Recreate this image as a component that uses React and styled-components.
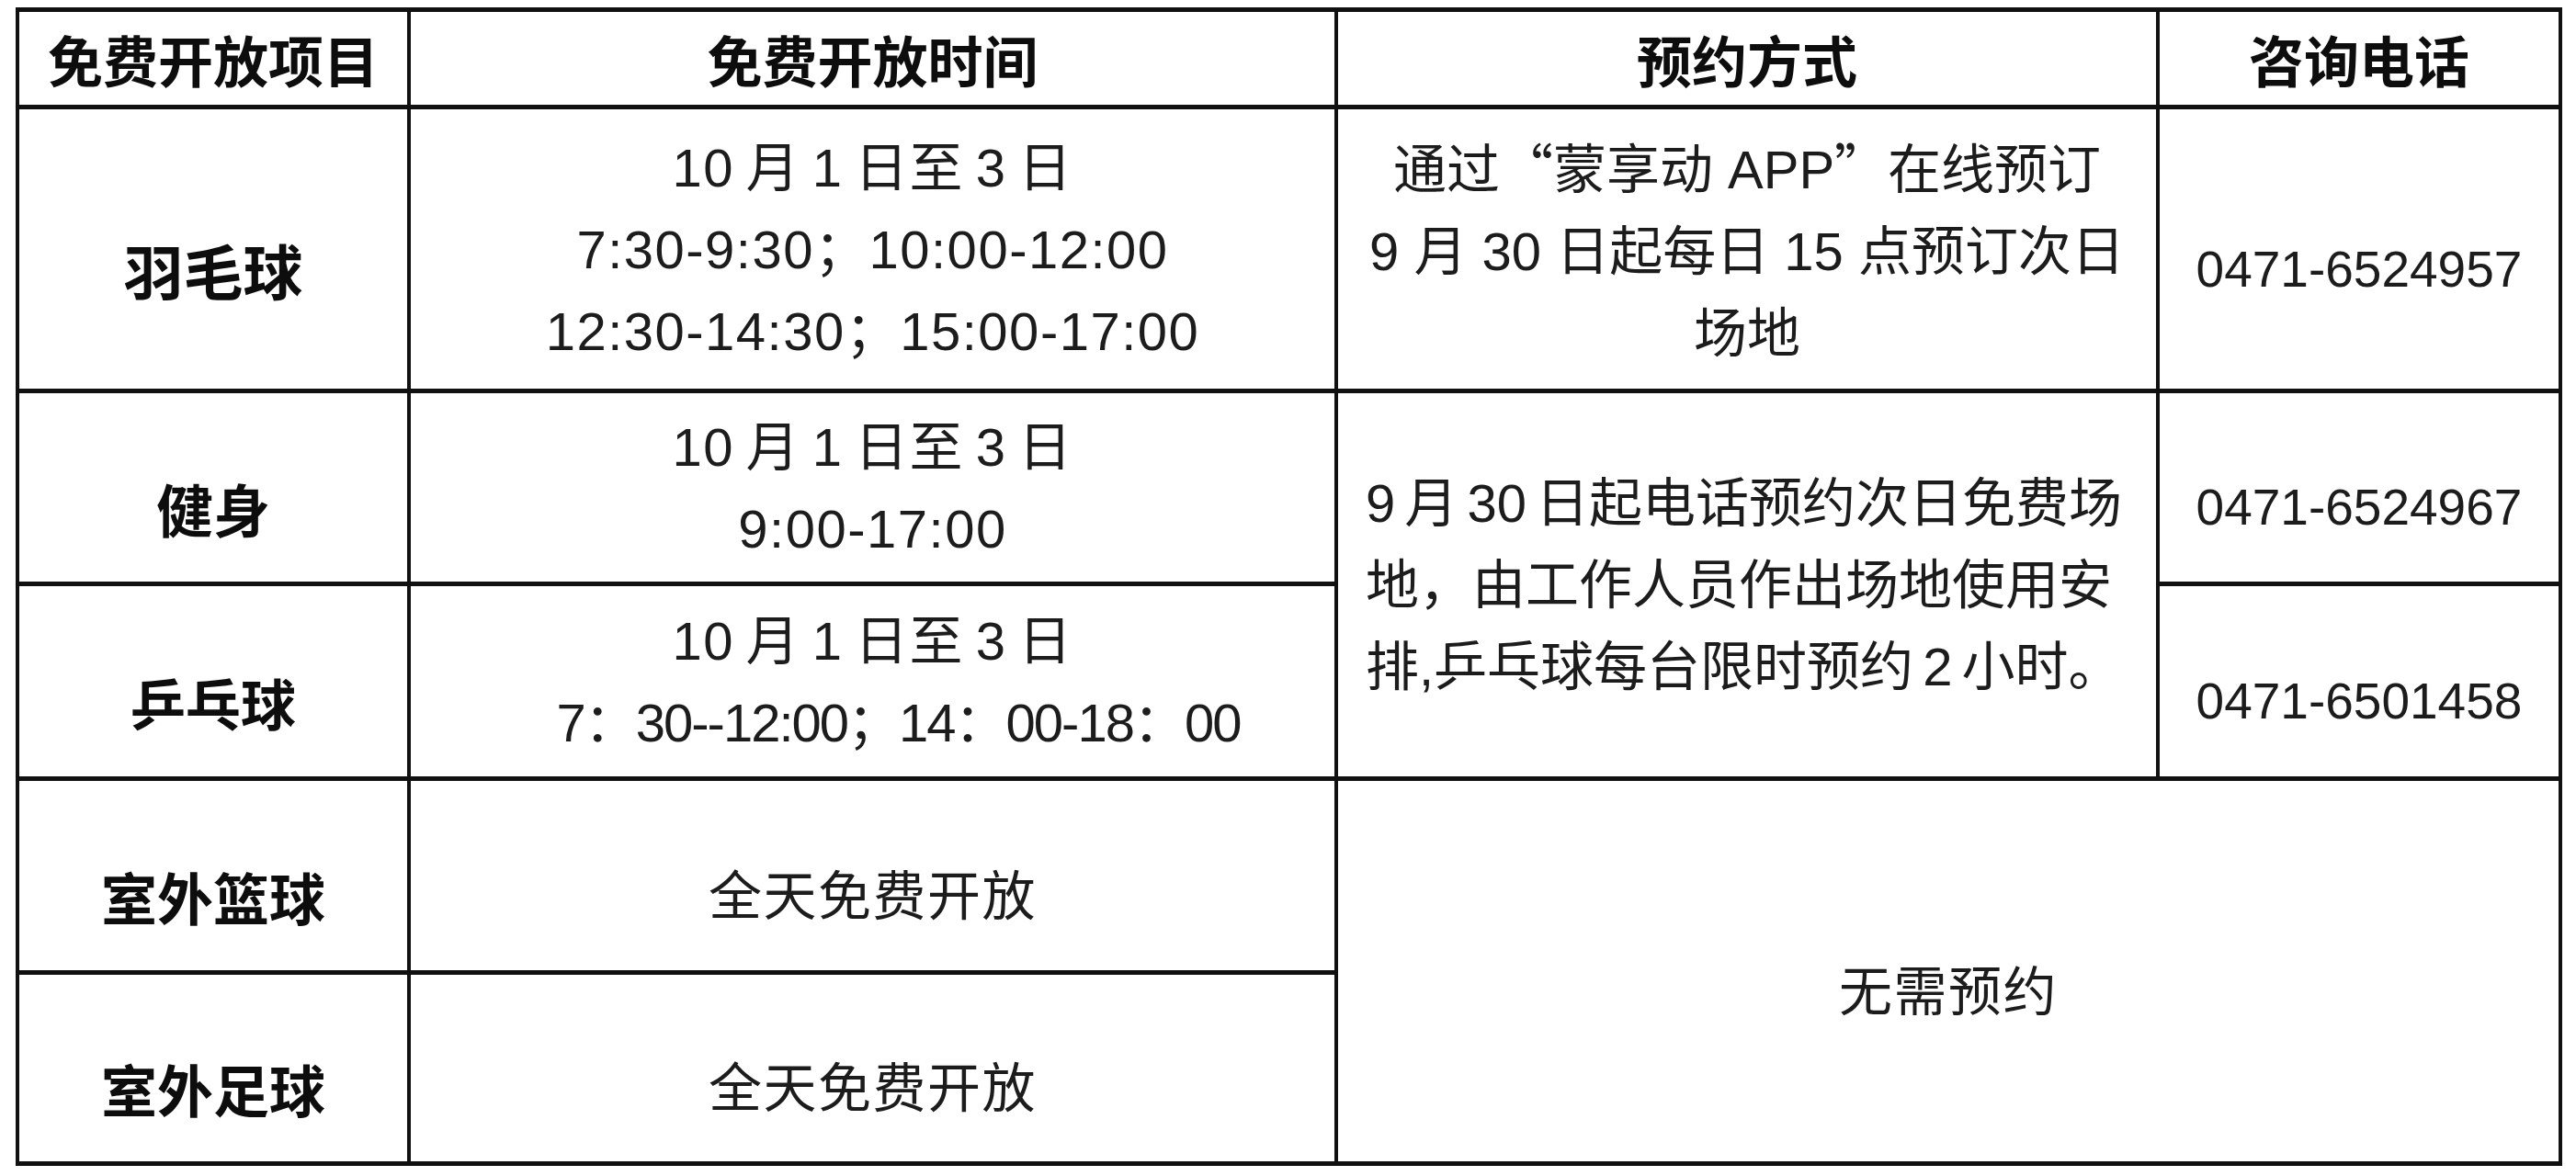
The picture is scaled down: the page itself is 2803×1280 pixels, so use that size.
import styled, { createGlobalStyle } from "styled-components";

const SANS = `"Liberation Sans", "Noto Sans CJK SC", sans-serif`;
const HEI = `"Noto Sans CJK SC", "Noto Sans CJK TC", sans-serif`;

const GlobalStyle = createGlobalStyle`
  html, body {
    margin: 0;
    padding: 0;
    background: #fff;
  }
  body {
    font-family: ${SANS};
    color: #1c1c1c;
  }
`;

const Page = styled.div`
  padding: 8px 0 0 17px;
`;

// the black background shows through the gaps and padding as the table rules
const Grid = styled.div`
  display: grid;
  grid-template-columns: 422px 1005px 890px 434px;
  grid-template-rows: 101px 304px 205px 207px 206px 203px;
  row-gap: 5px;
  column-gap: 4px;
  padding: 5px 4px;
  width: max-content;
  background: #111;
`;

const Cell = styled.div`
  background: #fff;
  display: flex;
  flex-direction: column;
  justify-content: center;
  align-items: ${(p) => (p.$left ? "flex-start" : "center")};
  padding-top: ${(p) => (p.$drop ? "44px" : "0")};
  padding-left: ${(p) => (p.$left ? "30px" : "0")};
  grid-row: ${(p) => (p.$rows ? `span ${p.$rows}` : "auto")};
  grid-column: ${(p) => (p.$cols ? `span ${p.$cols}` : "auto")};
`;

const HeadText = styled.span`
  font-family: ${HEI};
  font-weight: 700;
  font-size: 60px;
  line-height: 1;
  color: #0d0d0d;
`;

const Label = styled.span`
  font-family: ${HEI};
  font-weight: 700;
  font-size: ${(p) => p.$size ?? 61}px;
  line-height: 1;
  color: #0d0d0d;
`;

const Line = styled.div`
  font-size: 58px;
  line-height: 89px;
  white-space: pre;
  letter-spacing: ${(p) => p.$ls ?? 0}px;
  word-spacing: ${(p) => p.$ws ?? 0}px;
  margin-left: ${(p) => p.$shift ?? 0}px;
`;

const Quote = styled.span`
  font-family: ${HEI};
`;

const Phone = styled.span`
  font-family: "Liberation Sans", sans-serif;
  font-size: 55px;
  line-height: 1;
`;

function Times({ lines }) {
  return (
    <>
      {lines.map((l) => (
        <Line key={l.text} $ls={l.tight ? -2 : 1.5} $ws={-5} $shift={l.shift}>
          {l.text}
        </Line>
      ))}
    </>
  );
}

export default function App() {
  return (
    <>
      <GlobalStyle />
      <Page>
        <Grid>
          <Cell>
            <HeadText>免费开放项目</HeadText>
          </Cell>
          <Cell>
            <HeadText>免费开放时间</HeadText>
          </Cell>
          <Cell>
            <HeadText>预约方式</HeadText>
          </Cell>
          <Cell>
            <HeadText>咨询电话</HeadText>
          </Cell>

          {/* 羽毛球 */}
          <Cell $drop>
            <Label $size={65}>羽毛球</Label>
          </Cell>
          <Cell>
            <Times
              lines={[
                { text: "10 月 1 日至 3 日" },
                { text: "7:30-9:30；10:00-12:00" },
                { text: "12:30-14:30；15:00-17:00" },
              ]}
            />
          </Cell>
          <Cell>
            <Line>
              通过<Quote>“</Quote>蒙享动 APP<Quote>”</Quote>在线预订
            </Line>
            <Line>9 月 30 日起每日 15 点预订次日</Line>
            <Line>场地</Line>
          </Cell>
          <Cell $drop>
            <Phone>0471-6524957</Phone>
          </Cell>

          {/* 健身 */}
          <Cell $drop>
            <Label $size={62}>健身</Label>
          </Cell>
          <Cell>
            <Times lines={[{ text: "10 月 1 日至 3 日" }, { text: "9:00-17:00" }]} />
          </Cell>
          <Cell $rows={2} $left>
            <Line $ws={-6}>9 月 30 日起电话预约次日免费场</Line>
            <Line>地，由工作人员作出场地使用安</Line>
            <Line $ws={-6}>排,乒乓球每台限时预约 2 小时。</Line>
          </Cell>
          <Cell $drop>
            <Phone>0471-6524967</Phone>
          </Cell>

          {/* 乒乓球 */}
          <Cell $drop>
            <Label $size={60}>乒乓球</Label>
          </Cell>
          <Cell>
            <Times
              lines={[
                { text: "10 月 1 日至 3 日" },
                { text: "7：30--12:00；14：00-18：00", tight: true, shift: 56 },
              ]}
            />
          </Cell>
          <Cell $drop>
            <Phone>0471-6501458</Phone>
          </Cell>

          {/* 室外篮球 */}
          <Cell $drop>
            <Label>室外篮球</Label>
          </Cell>
          <Cell $drop>
            <Line $ls={1.5}>全天免费开放</Line>
          </Cell>
          <Cell $rows={2} $cols={2} $drop>
            <Line $ls={1.5}>无需预约</Line>
          </Cell>

          {/* 室外足球 */}
          <Cell $drop>
            <Label>室外足球</Label>
          </Cell>
          <Cell $drop>
            <Line $ls={1.5}>全天免费开放</Line>
          </Cell>
        </Grid>
      </Page>
    </>
  );
}
